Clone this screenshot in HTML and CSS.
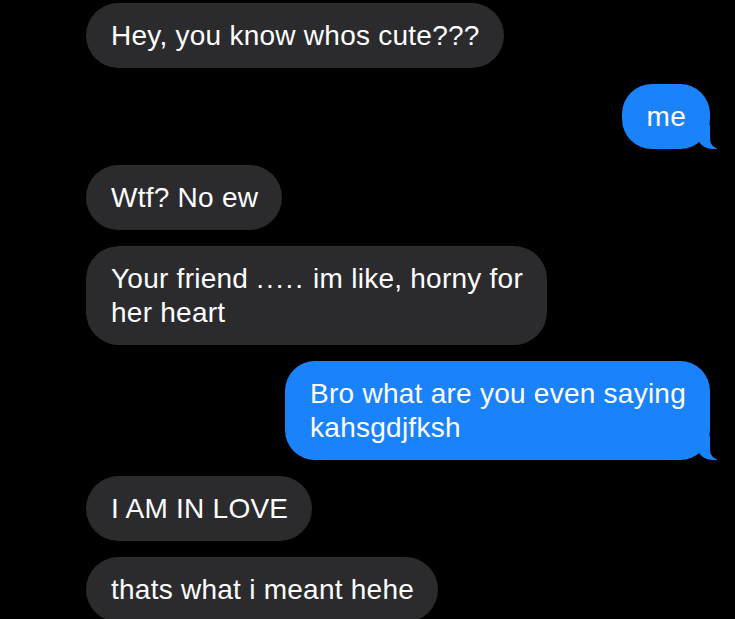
FILE: index.html
```html
<!DOCTYPE html>
<html lang="en">
<head>
    <meta charset="UTF-8">
    <meta name="viewport" content="width=device-width, initial-scale=1.0">
    <title>Messages</title>
    <link rel="stylesheet" href="styles.css">
</head>
<body>

    <!-- 会話スレッド -->
    <div class="thread">
        <div class="bubble received">Hey, you know whos cute???</div>
        <div class="bubble sent">me</div>
        <div class="bubble received">Wtf? No ew</div>
        <div class="bubble received">Your friend <span class="dots">.....</span> im like, horny for<br>her heart</div>
        <div class="bubble sent">Bro what are you even saying<br>kahsgdjfksh</div>
        <div class="bubble received">I AM IN LOVE</div>
        <div class="bubble received">thats what i meant hehe</div>
    </div>

</body>
</html>
```

FILE: styles.css
```css
/* ページ全体 */
body {
    margin: 0;
    background: #000;
    font-family: "Liberation Sans", Arial, sans-serif;
    overflow: hidden;
}

/* メッセージの並び */
.thread {
    display: flex;
    flex-direction: column;
    gap: 16px;
    padding: 3px 25px 0 86px;
}

/* 吹き出しの基本スタイル */
.bubble {
    position: relative;
    max-width: 480px;
    padding: 16px 24px 15px 25px;
    border-radius: 33px;
    font-size: 28px;
    line-height: 34px;
    letter-spacing: 0.25px;
    color: #fff;
}

/* 点々は少し広め */
.dots {
    letter-spacing: 2px;
}

.received {
    align-self: flex-start;
    background: #2b2b2e;
}

.sent {
    align-self: flex-end;
    background: #1a82fb;
    border-radius: 30px;
}

/* 送信側のしっぽ */
.sent::before {
    content: "";
    position: absolute;
    bottom: 0;
    right: -7px;
    width: 20px;
    height: 24px;
    background: #1a82fb;
    border-bottom-left-radius: 16px 14px;
}

.sent::after {
    content: "";
    position: absolute;
    bottom: 0;
    right: -26px;
    width: 26px;
    height: 26px;
    background: #000;
    border-bottom-left-radius: 10px;
}
```
